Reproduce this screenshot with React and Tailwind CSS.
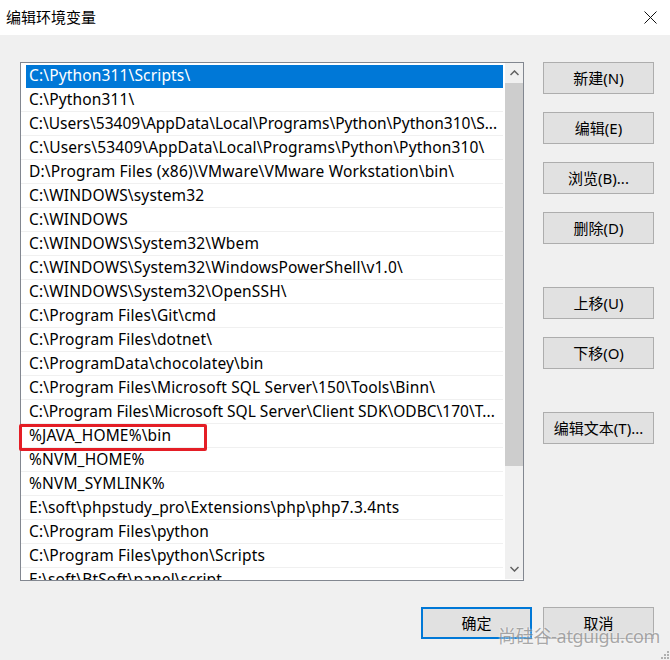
import React from "react";

const rows = [
  "C:\\Python311\\Scripts\\",
  "C:\\Python311\\",
  "C:\\Users\\53409\\AppData\\Local\\Programs\\Python\\Python310\\S...",
  "C:\\Users\\53409\\AppData\\Local\\Programs\\Python\\Python310\\",
  "D:\\Program Files (x86)\\VMware\\VMware Workstation\\bin\\",
  "C:\\WINDOWS\\system32",
  "C:\\WINDOWS",
  "C:\\WINDOWS\\System32\\Wbem",
  "C:\\WINDOWS\\System32\\WindowsPowerShell\\v1.0\\",
  "C:\\WINDOWS\\System32\\OpenSSH\\",
  "C:\\Program Files\\Git\\cmd",
  "C:\\Program Files\\dotnet\\",
  "C:\\ProgramData\\chocolatey\\bin",
  "C:\\Program Files\\Microsoft SQL Server\\150\\Tools\\Binn\\",
  "C:\\Program Files\\Microsoft SQL Server\\Client SDK\\ODBC\\170\\T...",
  "%JAVA_HOME%\\bin",
  "%NVM_HOME%",
  "%NVM_SYMLINK%",
  "E:\\soft\\phpstudy_pro\\Extensions\\php\\php7.3.4nts",
  "C:\\Program Files\\python",
  "C:\\Program Files\\python\\Scripts",
  "E:\\soft\\BtSoft\\panel\\script",
];

function Btn({ children, className = "", primary = false }) {
  return (
    <div
      className={
        "h-[32px] w-[111px] flex items-center justify-center bg-[#e1e1e1] text-[15px] text-black " +
        (primary ? "border-2 border-[#0078d7] " : "border border-[#adadad] ") +
        className
      }
    >
      {children}
    </div>
  );
}

export default function App() {
  return (
    <div
      className="relative w-[670px] h-[660px] overflow-hidden bg-[#f0f0f0] text-black"
      style={{ fontFamily: '"Noto Sans", "Noto Sans CJK SC", sans-serif' }}
    >
      {/* title bar */}
      <div className="h-[35px] bg-white flex items-center justify-between pl-[6px] pr-[13px]">
        <span className="text-[15px] leading-none">编辑环境变量</span>
        <svg width="13" height="13" viewBox="0 0 13 13">
          <path d="M0.5 0.5 L12.5 12.5 M12.5 0.5 L0.5 12.5" stroke="#111" strokeWidth="1" fill="none" />
        </svg>
      </div>

      <div className="flex pl-[20px] pt-[27px]">
        {/* list box */}
        <div className="w-[504px] h-[519px] border border-[#828790] bg-white flex">
          <div className="flex-1 overflow-hidden pt-[1px] relative">
            {rows.map((r, i) => (
              <div
                key={i}
                className={
                  "h-[24px] flex items-center whitespace-nowrap text-[15.5px] " +
                  (r.endsWith("...") ? "tracking-normal " : "tracking-[0.15px] ") +
                  (i === 0 ? "" : "border-b border-[#f0f0f0]")
                }
              >
                {i === 0 ? (
                  <div className="ml-[5px] h-[23px] w-full bg-[#0078d7] text-white flex items-center pl-[3px]">
                    {r}
                  </div>
                ) : (
                  <span className="pl-[8px]">{r}</span>
                )}
              </div>
            ))}
          </div>
          {/* scrollbar */}
          <div className="w-[18px] ml-[2px] h-[516px] bg-[#f0f0f0] flex flex-col">
            <div className="h-[20px] flex items-center justify-center">
              <svg width="9" height="6" viewBox="0 0 9 6">
                <path d="M0.5 5 L4.5 1 L8.5 5" stroke="#606060" strokeWidth="1.5" fill="none" />
              </svg>
            </div>
            <div className="h-[383px] bg-[#cdcdcd]" />
            <div className="flex-1" />
            <div className="h-[20px] flex items-center justify-center">
              <svg width="9" height="6" viewBox="0 0 9 6">
                <path d="M0.5 1 L4.5 5 L8.5 1" stroke="#606060" strokeWidth="1.5" fill="none" />
              </svg>
            </div>
          </div>
        </div>

        {/* side buttons */}
        <div className="ml-[19px] flex flex-col">
          <Btn>新建(N)</Btn>
          <Btn className="mt-[18px]">编辑(E)</Btn>
          <Btn className="mt-[18px]">浏览(B)...</Btn>
          <Btn className="mt-[18px]">删除(D)</Btn>
          <Btn className="mt-[43px]">上移(U)</Btn>
          <Btn className="mt-[18px]">下移(O)</Btn>
          <Btn className="mt-[43px]">编辑文本(T)...</Btn>
        </div>
      </div>

      {/* bottom buttons */}
      <div className="flex justify-end gap-[11px] pr-[16px] mt-[26px]">
        <Btn primary>确定</Btn>
        <Btn>取消</Btn>
      </div>

      {/* red highlight */}
      <div className="absolute left-[19px] top-[424px] w-[188px] h-[27px] border-[3px] border-[#e41e26] rounded-[2px]" />

      {/* watermark */}
      <div
        className="absolute left-[498px] top-[627px] text-[18px] leading-none tracking-[-0.3px] text-[#909090] opacity-75 whitespace-nowrap"
        style={{ textShadow: "0 0 2px #fff, 0 0 2px #fff" }}
      >
        尚硅谷-atguigu.com
      </div>

      {/* resize grip */}
      <svg className="absolute right-[1px] bottom-[1px]" width="10" height="10" viewBox="0 0 10 10">
        {[[8, 0], [8, 3], [5, 3], [8, 6], [5, 6], [2, 6]].map(([x, y], i) => (
          <rect key={i} x={x} y={y + 2} width="2" height="2" fill="#b0b0b0" />
        ))}
      </svg>
    </div>
  );
}
